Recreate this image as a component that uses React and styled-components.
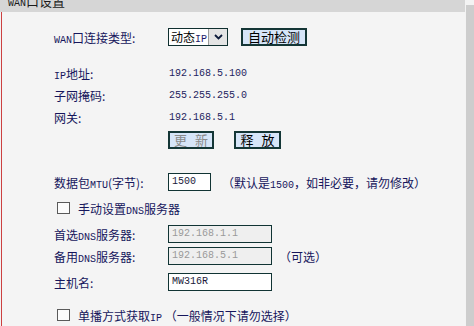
import React from 'react'
import styled, { createGlobalStyle } from 'styled-components'

const GlobalStyle = createGlobalStyle`
  html, body {
    margin: 0;
    padding: 0;
    background: #f3f3f3;
  }
  body {
    font-family: "Noto Sans CJK SC", "Noto Sans", sans-serif;
    font-size: 12px;
    color: #16165c;
  }
`

function App() {
  return (
    <Page>
      <GlobalStyle />
      <Main>
        <Header>
          <HeaderTitle><Mono>WAN</Mono>口设置</HeaderTitle>
        </Header>

        <Panel>
          <Row $h={18}>
            <Label><Mono>WAN</Mono>口连接类型:</Label>
            <SelectBox>
              <SelectText>动态<Mono $dark>IP</Mono></SelectText>
              <SelectArrow>
                <svg width="9" height="6" viewBox="0 0 9 6">
                  <path d="M1 1 L4.5 4.5 L8 1" fill="none" stroke="#0c1a3a" strokeWidth="1.8" />
                </svg>
              </SelectArrow>
            </SelectBox>
            <Button $w={66} $ml={13}>自动检测</Button>
          </Row>

          <Row $mt={16}>
            <Label><Mono>IP</Mono>地址:</Label>
            <Value>192.168.5.100</Value>
          </Row>
          <Row>
            <Label>子网掩码:</Label>
            <Value>255.255.255.0</Value>
          </Row>
          <Row>
            <Label>网关:</Label>
            <Value>192.168.5.1</Value>
          </Row>

          <Row $h={18} $mt={3}>
            <Label />
            <Button $w={46} $spaced $disabled>更 新</Button>
            <Button $w={47} $spaced $ml={20}>释 放</Button>
          </Row>

          <Row $h={18} $mt={24}>
            <Label>数据包<Mono>MTU</Mono>(字节):</Label>
            <Input $w={43}>1500</Input>
            <Hint $ml={11}>（默认是<Mono>1500</Mono>，如非必要，请勿修改）</Hint>
          </Row>

          <CheckRow $mt={6}>
            <CheckBox />
            <span>手动设置<Mono>DNS</Mono>服务器</span>
          </CheckRow>

          <Row $h={18} $mt={6}>
            <Label>首选<Mono>DNS</Mono>服务器:</Label>
            <Input $w={104} $muted>192.168.1.1</Input>
          </Row>
          <Row $h={18} $mt={4}>
            <Label>备用<Mono>DNS</Mono>服务器:</Label>
            <Input $w={104} $muted>192.168.5.1</Input>
            <Hint $ml={7}>（可选）</Hint>
          </Row>

          <Row $h={18} $mt={8}>
            <Label>主机名:</Label>
            <Input $w={104}>MW316R</Input>
          </Row>

          <CheckRow $mt={13}>
            <CheckBox />
            <span>单播方式获取<Mono>IP</Mono> （一般情况下请勿选择）</span>
          </CheckRow>
        </Panel>
      </Main>
      <ScrollStrip />
    </Page>
  )
}

export default App

const Page = styled.div`
  display: flex;
  width: 474px;
  height: 326px;
  overflow: hidden;
  background: #f3f3f3;
`

const Main = styled.div`
  width: 465px;
  display: flex;
  flex-direction: column;
`

const Header = styled.div`
  height: 12px;
  flex-shrink: 0;
  background: #d6d6d6;
  overflow: hidden;
  padding-left: 8px;
`

const HeaderTitle = styled.div`
  margin-top: -8px;
  line-height: 17px;
  font-size: 13px;
  color: #1a1a1a;
`

const Panel = styled.div`
  flex: 1;
  margin-left: 1px;
  border-left: 1px solid #cc4040;
  padding: 16px 0 0 52px;
  background: #f4f4f4;
`

const ScrollStrip = styled.div`
  flex: 1;
  margin: 5px 0 0 1px;
  background: #cdcdcd;
`

const Mono = styled.span`
  font-family: "Liberation Mono", "DejaVu Sans Mono", monospace;
  font-size: 10px;
  color: ${p => (p.$dark ? '#1a1a6a' : 'inherit')};
`

const Row = styled.div`
  display: flex;
  align-items: center;
  height: ${p => p.$h || 22}px;
  margin-top: ${p => p.$mt || 0}px;
  white-space: nowrap;
`

const CheckRow = styled(Row)`
  height: 22px;
  padding-left: 3px;
  gap: 8px;
`

const Label = styled.div`
  width: 114px;
  flex-shrink: 0;
`

const Value = styled.div`
  font-family: "Liberation Mono", "DejaVu Sans Mono", monospace;
  font-size: 10px;
  color: #1e1e60;
  padding-left: 1px;
`

const SelectBox = styled.div`
  display: flex;
  width: 60px;
  height: 18px;
  box-sizing: border-box;
  border: 1px solid #0f2f2f;
  background: #fff;
`

const SelectText = styled.div`
  flex: 1;
  padding-left: 2px;
  color: #000;
  line-height: 16px;
`

const SelectArrow = styled.div`
  width: 18px;
  background: #e4e4e4;
  border-left: 1px solid #9a9a9a;
  display: flex;
  align-items: center;
  justify-content: center;
`

const Button = styled.div`
  width: ${p => p.$w}px;
  height: 18px;
  margin-left: ${p => p.$ml || 0}px;
  box-sizing: border-box;
  border: 2px solid #143636;
  background: #d6e5f8;
  color: ${p => (p.$disabled ? '#8a8a8a' : '#000')};
  font-size: 13px;
  line-height: 14px;
  text-align: center;
  word-spacing: ${p => (p.$spaced ? '5px' : 'normal')};
`

const Input = styled.div`
  width: ${p => p.$w}px;
  height: 18px;
  box-sizing: border-box;
  border: 1px solid #113434;
  background: ${p => (p.$muted ? '#efefef' : '#fff')};
  color: ${p => (p.$muted ? '#9a9a9a' : '#1a1a3a')};
  font-family: "Liberation Mono", "DejaVu Sans Mono", monospace;
  font-size: 10px;
  line-height: 16px;
  padding-left: 3px;
`

const Hint = styled.div`
  margin-left: ${p => p.$ml || 0}px;
`

const CheckBox = styled.div`
  width: 13px;
  height: 12px;
  box-sizing: border-box;
  border: 1px solid #5a5a5a;
  background: #fcfcfc;
`
